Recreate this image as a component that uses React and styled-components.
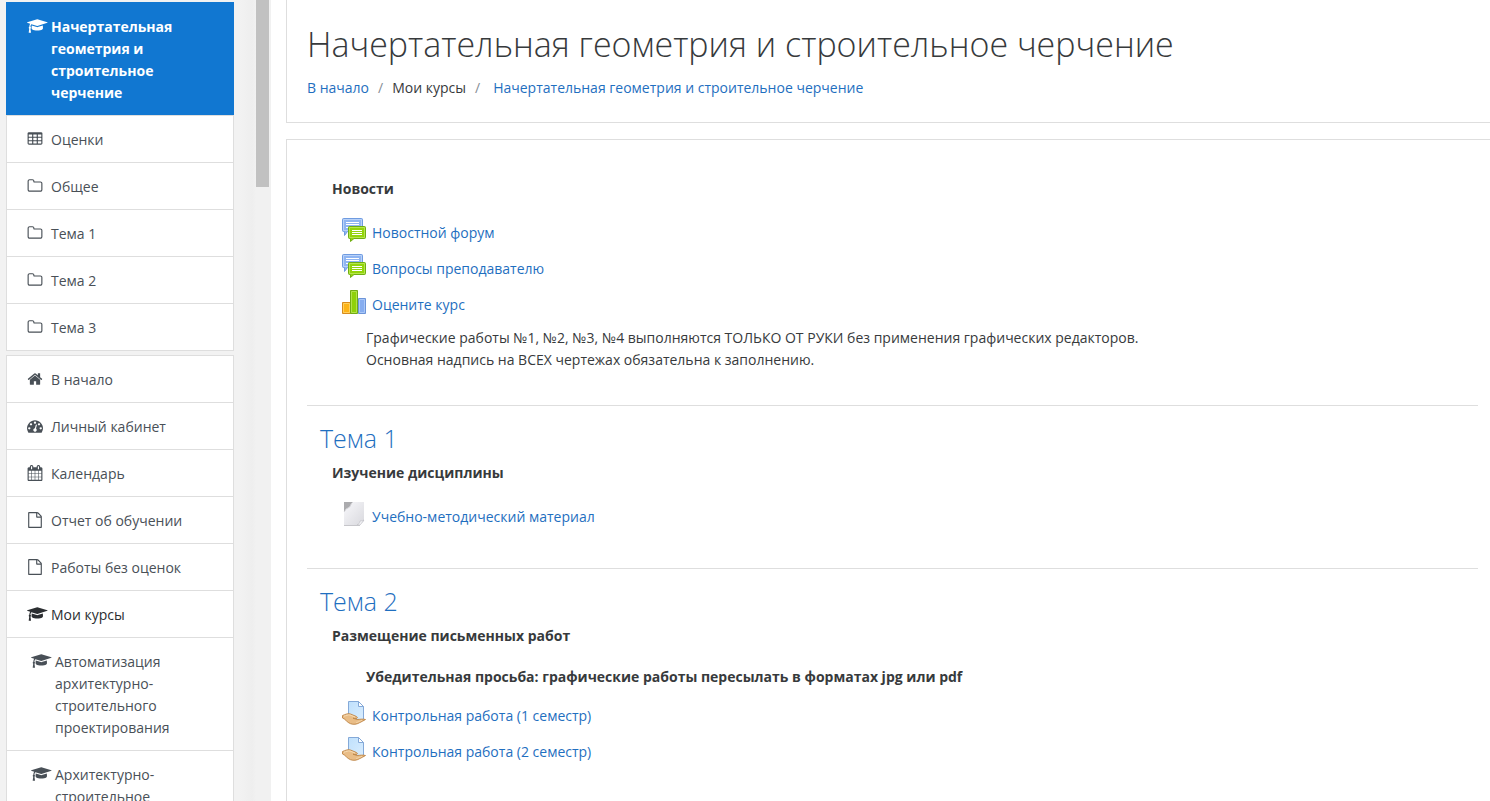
import React from "react";
import styled, { createGlobalStyle, css } from "styled-components";

const Global = createGlobalStyle`
  *, *::before, *::after { box-sizing: border-box; }
  body {
    margin: 0;
    overflow: hidden;
    background: #fff;
    color: #373a3c;
    font-family: "Open Sans", "Noto Sans", sans-serif;
    font-size: 14px;
    line-height: 22px;
  }
  h1, h2, h3, p, ul, ol { margin: 0; padding: 0; }
  ul, ol { list-style: none; }
  a { color: #1f6fc0; text-decoration: none; }
`;

const Page = styled.div`
  display: grid;
  grid-template-columns: 271px minmax(0, 1fr);
  height: 100vh;
  overflow: hidden;
`;

const Drawer = styled.aside`
  display: flex;
  justify-content: space-between;
  overflow: hidden;
  padding: 2px 2px 0 6px;
  background: linear-gradient(90deg, #f2f2f2 0, #f2f2f2 240px, #eeeeee 252px, #f1f1f1 256px);
`;

const DrawerNav = styled.nav`
  width: 228px;
  display: flex;
  flex-direction: column;
  gap: 4px;
`;

const NavGroup = styled.ul`
  border-bottom: 1px solid #dedede;
`;

const NavLink = styled.a`
  display: flex;
  gap: 8px;
  padding: 13px 20px 11px;
  padding-left: ${(p) => (p.$nested ? 24 : 20)}px;
  border: 1px solid #dedede;
  border-bottom: 0;
  background: #fff;
  color: ${(p) => (p.$dark ? "#2b2e31" : "#495057")};
  ${(p) =>
    p.$active &&
    css`
      background: #1177d1;
      border-color: #1177d1;
      color: #fff;
      font-weight: 700;
    `}
`;

const NavIcon = styled.span`
  flex: none;
  width: 16px;
  height: 20px;
  display: flex;
  align-items: center;
  svg { flex: none; display: block; height: 16px; fill: currentColor; }
`;

const ScrollThumb = styled.div`
  flex: none;
  width: 13px;
  height: 185px;
  background: #c1c1c1;
  box-shadow: 0 -2px #c1c1c1;
`;

const Main = styled.main`
  display: flex;
  flex-direction: column;
  gap: 16px;
  padding-left: 15px;
  overflow: hidden;
`;

const Panel = styled.section`
  border: 1px solid #dedede;
  border-right: 0;
  padding: 0 12px 0 20px;
`;

const HeaderPanel = styled(Panel)`
  border-top: 0;
  padding-top: 22px;
  padding-bottom: 23px;
`;

const ContentPanel = styled(Panel)`
  flex: 1;
  border-bottom: 0;
  padding-top: 38px;
`;

const Title = styled.h1`
  font-size: 34px;
  line-height: 44px;
  font-weight: 300;
`;

const Crumbs = styled.ol`
  display: flex;
  padding-top: 11px;
`;

const Crumb = styled.li`
  & + &::before {
    content: "/";
    padding: 0 9px;
    color: #868e96;
  }
  &:last-child::before { padding-right: 13px; }
`;

const Topic = styled.section`
  padding: 0 13px 34px;
  & + & {
    border-top: 1px solid #dedede;
    padding-top: 15px;
  }
`;

const TopicTitle = styled.h2`
  padding-bottom: 7px;
  font-size: 25px;
  line-height: 34px;
  font-weight: 300;
`;

const Summary = styled.h3`
  padding-left: 12px;
  padding-bottom: ${(p) => (p.$tight ? 8 : 14)}px;
  font-size: 14px;
  line-height: 22px;
  font-weight: 700;
`;

const Note = styled.p`
  padding: 5px 0 0 46px;
  ${(p) => p.$bold && "padding-top: 11px; padding-bottom: 9px; font-weight: 700;"}
`;

const Activity = styled.a`
  display: flex;
  align-items: flex-end;
  gap: 6px;
  height: 36px;
  padding: 0 0 6px 22px;
  svg { flex: none; display: block; margin-bottom: 2px; }
`;

const CAP = {
  w: 2304,
  d: "M1774 836l18 316q4 69-82 128t-235 93.5-323 34.5-323-34.5-235-93.5-82-128l18-316 574 181q22 7 48 7t48-7zm530-324q0 23-22 31l-1120 352q-4 1-10 1t-10-1l-652-206q-43 34-71 111.5t-34 178.5q63 36 63 109 0 69-58 107l58 433q2 14-8 25-9 11-24 11h-192q-15 0-24-11-10-11-8-25l58-433q-58-38-58-107 0-73 65-111 11-207 98-330l-333-104q-22-8-22-31t22-31l1120-352q4-1 10-1t10 1l1120 352q22 8 22 31z",
};
const cell = (x, y) =>
  `M${x} ${y}v-192q0-14-9-23t-23-9h-320q-14 0-23 9t-9 23v192q0 14 9 23t23 9h320q14 0 23-9t9-23z`;
const TABLE = {
  w: 1792,
  d:
    [576, 1088, 1600].map((x) => [1376, 992, 608].map((y) => cell(x, y)).join("")).join("") +
    "M1728 288v1088q0 66-47 113t-113 47h-1344q-66 0-113-47t-47-113v-1088q0-66 47-113t113-47h1344q66 0 113 47t47 113z",
};
const FOLDER = {
  w: 1792,
  d: "M1600 1312v-704q0-40-28-68t-68-28h-704q-40 0-68-28t-28-68v-64q0-40-28-68t-68-28h-320q-40 0-68 28t-28 68v960q0 40 28 68t68 28h1216q40 0 68-28t28-68zm128-704v704q0 92-66 158t-158 66h-1216q-92 0-158-66t-66-158v-960q0-92 66-158t158-66h320q92 0 158 66t66 158v32h672q92 0 158 66t66 158z",
};
const HOME = {
  w: 1792,
  d: "M1472 992v480q0 26-19 45t-45 19h-384v-384h-256v384h-384q-26 0-45-19t-19-45v-480q0-1 .5-3t.5-3l575-474 575 474q1 2 1 6zm223-69l-62 74q-8 9-21 11h-3q-13 0-21-7l-692-577-692 577q-12 8-24 7-13-2-21-11l-62-74q-8-10-7-23.5t11-21.5l719-599q32-26 76-26t76 26l244 204v-195q0-14 9-23t23-9h192q14 0 23 9t9 23v408l219 182q10 8 11 21.5t-7 23.5z",
};
const DASHBOARD = {
  w: 1792,
  d: "M384 1152q0-53-37.5-90.5t-90.5-37.5-90.5 37.5-37.5 90.5 37.5 90.5 90.5 37.5 90.5-37.5 37.5-90.5zm192-448q0-53-37.5-90.5t-90.5-37.5-90.5 37.5-37.5 90.5 37.5 90.5 90.5 37.5 90.5-37.5 37.5-90.5zm428 481l101-382q6-26-7.5-48.5t-38.5-29.5-48 6.5-30 39.5l-101 382q-60 5-107 43.5t-63 98.5q-20 77 20 146t117 89 146-20 89-117q16-60-6-117t-72-91zm660-33q0-53-37.5-90.5t-90.5-37.5-90.5 37.5-37.5 90.5 37.5 90.5 90.5 37.5 90.5-37.5 37.5-90.5zm-640-640q0-53-37.5-90.5t-90.5-37.5-90.5 37.5-37.5 90.5 37.5 90.5 90.5 37.5 90.5-37.5 37.5-90.5zm448 192q0-53-37.5-90.5t-90.5-37.5-90.5 37.5-37.5 90.5 37.5 90.5 90.5 37.5 90.5-37.5 37.5-90.5zm320 448q0 261-141 483-19 29-54 29h-1402q-35 0-54-29-141-221-141-483 0-182 71-348t191-286 286-191 348-71 348 71 286 191 191 286 71 348z",
};
const CALENDAR = {
  w: 1792,
  d: "M192 1664h288v-288h-288v288zm352 0h320v-288h-320v288zm-352-352h288v-320h-288v320zm352 0h320v-320h-320v320zm-352-384h288v-288h-288v288zm736 736h320v-288h-320v288zm-384-736h320v-288h-320v288zm768 736h288v-288h-288v288zm-384-352h320v-320h-320v320zm-352-864v-288q0-13-9.5-22.5t-22.5-9.5h-64q-13 0-22.5 9.5t-9.5 22.5v288q0 13 9.5 22.5t22.5 9.5h64q13 0 22.5-9.5t9.5-22.5zm736 864h288v-320h-288v320zm-384-384h320v-288h-320v288zm384 0h288v-288h-288v288zm32-480v-288q0-13-9.5-22.5t-22.5-9.5h-64q-13 0-22.5 9.5t-9.5 22.5v288q0 13 9.5 22.5t22.5 9.5h64q13 0 22.5-9.5t9.5-22.5zm384-64v1280q0 52-38 90t-90 38h-1408q-52 0-90-38t-38-90v-1280q0-52 38-90t90-38h128v-96q0-66 47-113t113-47h64q66 0 113 47t47 113v96h384v-96q0-66 47-113t113-47h64q66 0 113 47t47 113v96h128q52 0 90 38t38 90z",
};
const FILE = {
  w: 1792,
  d: "M1596 380q28 28 48 76t20 88v1152q0 40-28 68t-68 28h-1344q-40 0-68-28t-28-68v-1600q0-40 28-68t68-28h896q40 0 88 20t76 48zm-444-244v376h376q-10-29-22-41l-313-313q-12-12-41-22zm384 1528v-1024h-416q-40 0-68-28t-28-68v-416h-768v1536h1280z",
};

const Glyph = ({ icon }) => (
  <svg viewBox={`0 0 ${icon.w} 1792`} fillRule="evenodd" aria-hidden="true">
    <path d={icon.d} />
  </svg>
);

const ForumIcon = () => (
  <svg width="24" height="24" viewBox="0 0 24 24" aria-hidden="true">
    <path d="M1.5.5h18a1 1 0 0 1 1 1v12h-15L2.5 17.500v-4h-1a1 1 0 0 1-1-1v-11a1 1 0 0 1 1-1z" fill="#8fb5f2" stroke="#6f9be0" />
    <path d="M1.500 1.500h18v11h-18z" fill="none" stroke="#b9d2f8" />
    <path d="M4 4.500h13M4 6.500h13M4 9.500h4" stroke="#fff" />
    <path d="M7.500 8.500h15a1 1 0 0 1 1 1v10a1 1 0 0 1-1 1H12L8.500 23.500v-3h-1a1 1 0 0 1-1-1v-10a1 1 0 0 1 1-1z" fill="#93d40a" stroke="#6fae12" />
    <path d="M7.500 9.500h15v10h-15z" fill="none" stroke="#b5e64c" />
    <path d="M10 12.500h10M10 14.500h10M10 16.500h10" stroke="#fff" />
  </svg>
);

const ChartIcon = () => (
  <svg width="24" height="24" viewBox="0 0 24 24" aria-hidden="true">
    <path d="M.5 12.500h8v11h-8z" fill="#fdb417" stroke="#d78b1c" />
    <path d="M1.500 13.500h6v9h-6z" fill="none" stroke="#ffcf5c" />
    <path d="M16.500 8.500h7v15h-7z" fill="#86adf0" stroke="#6c94d8" />
    <path d="M17.500 9.500h5v13h-5z" fill="none" stroke="#a9c7f8" />
    <path d="M8.500.5h7v23h-7z" fill="#8fd10a" stroke="#72ab16" />
    <path d="M9.500 1.500h5v21h-5z" fill="none" stroke="#b1e24c" />
  </svg>
);

const PaperIcon = () => (
  <svg width="24" height="24" viewBox="0 0 24 24" aria-hidden="true">
    <defs>
      <linearGradient id="paper" x1="0" y1="0" x2="1" y2="1">
        <stop offset="0" stopColor="#f8f8fb" />
        <stop offset="1" stopColor="#d9d9de" />
      </linearGradient>
    </defs>
    <path d="M10 0h12v19l-4 4H2V9z" fill="url(#paper)" />
    <path d="M2 0h9C8 2 9 5 6 6S4 8 2 10z" fill="#ababae" />
    <path d="M11 0C8 2 9 5 6 6S4 8 2 10" fill="none" stroke="#d4d4d8" />
    <path d="M22 18c-2 1-3 1-4 1 0 2-1 3-3 4h3z" fill="#f8f8fa" stroke="#b9b9bf" strokeWidth=".6" />
    <path d="M2 23.500h16" stroke="#c6c6ca" />
  </svg>
);

const AssignIcon = () => (
  <svg width="24" height="24" viewBox="0 0 24 24" aria-hidden="true">
    <defs>
      <linearGradient id="sheet" x1="0" y1="0" x2="1" y2="1">
        <stop offset="0" stopColor="#bfe0fc" />
        <stop offset="1" stopColor="#d9edfe" />
      </linearGradient>
    </defs>
    <path d="M6.500.5h10l5 5v14h-15z" fill="url(#sheet)" stroke="#84a9d8" />
    <path d="M16.500.5v5h5z" fill="#fff" stroke="#84a9d8" />
    <path d="M.5 14.500C3 13.500 6 12 8.500 13l6 2.500c1.500.8 1 2-.5 2l-3-.3 4 1.300c3-.1 6-.8 8.500 0-2 1.500-4 2-6 3.200-3 1.800-6 2-9 1C5 21.500 3.500 18 .5 17z" fill="#e9bd87" stroke="#bd8446" strokeWidth=".9" />
    <path d="M2 15.200c2-.5 4-1.700 6-1.200l5 2" fill="none" stroke="#f7dcb4" />
    <path d="M14 21.500c3-.6 4-1.600 6-2.200" fill="none" stroke="#f3d3a6" />
  </svg>
);

const courseItems = [
  { icon: CAP, text: "Начертательная геометрия и строительное черчение", active: true },
  { icon: TABLE, text: "Оценки" },
  { icon: FOLDER, text: "Общее" },
  { icon: FOLDER, text: "Тема 1" },
  { icon: FOLDER, text: "Тема 2" },
  { icon: FOLDER, text: "Тема 3" },
];
const siteItems = [
  { icon: HOME, text: "В начало" },
  { icon: DASHBOARD, text: "Личный кабинет" },
  { icon: CALENDAR, text: "Календарь" },
  { icon: FILE, text: "Отчет об обучении" },
  { icon: FILE, text: "Работы без оценок" },
  { icon: CAP, text: "Мои курсы", dark: true },
  { icon: CAP, text: "Автоматизация архитектурно-строительного проектирования", nested: true },
  { icon: CAP, text: "Архитектурно-строительное", nested: true },
];

const Group = ({ items }) => (
  <NavGroup>
    {items.map((it) => (
      <li key={it.text}>
        <NavLink href="#" $active={it.active} $nested={it.nested} $dark={it.dark}>
          <NavIcon>
            <Glyph icon={it.icon} />
          </NavIcon>
          <span>{it.text}</span>
        </NavLink>
      </li>
    ))}
  </NavGroup>
);

const Item = ({ icon: Icon, children }) => (
  <Activity href="#">
    <Icon />
    <span>{children}</span>
  </Activity>
);

export default function App() {
  return (
    <>
      <Global />
      <Page>
        <Drawer>
          <DrawerNav>
            <Group items={courseItems} />
            <Group items={siteItems} />
          </DrawerNav>
          <ScrollThumb />
        </Drawer>
        <Main>
          <HeaderPanel as="header">
            <Title>Начертательная геометрия и строительное черчение</Title>
            <Crumbs>
              <Crumb><a href="#">В начало</a></Crumb>
              <Crumb>Мои курсы</Crumb>
              <Crumb><a href="#">Начертательная геометрия и строительное черчение</a></Crumb>
            </Crumbs>
          </HeaderPanel>
          <ContentPanel>
            <Topic>
              <Summary>Новости</Summary>
              <Item icon={ForumIcon}>Новостной форум</Item>
              <Item icon={ForumIcon}>Вопросы преподавателю</Item>
              <Item icon={ChartIcon}>Оцените курс</Item>
              <Note>
                Графические работы №1, №2, №3, №4 выполняются ТОЛЬКО ОТ РУКИ без применения графических редакторов.
                <br />
                Основная надпись на ВСЕХ чертежах обязательна к заполнению.
              </Note>
            </Topic>
            <Topic>
              <TopicTitle><a href="#">Тема 1</a></TopicTitle>
              <Summary>Изучение дисциплины</Summary>
              <Item icon={PaperIcon}>Учебно-методический материал</Item>
            </Topic>
            <Topic>
              <TopicTitle><a href="#">Тема 2</a></TopicTitle>
              <Summary $tight>Размещение письменных работ</Summary>
              <Note $bold>Убедительная просьба: графические работы пересылать в форматах jpg или pdf</Note>
              <Item icon={AssignIcon}>Контрольная работа (1 семестр)</Item>
              <Item icon={AssignIcon}>Контрольная работа (2 семестр)</Item>
            </Topic>
          </ContentPanel>
        </Main>
      </Page>
    </>
  );
}
